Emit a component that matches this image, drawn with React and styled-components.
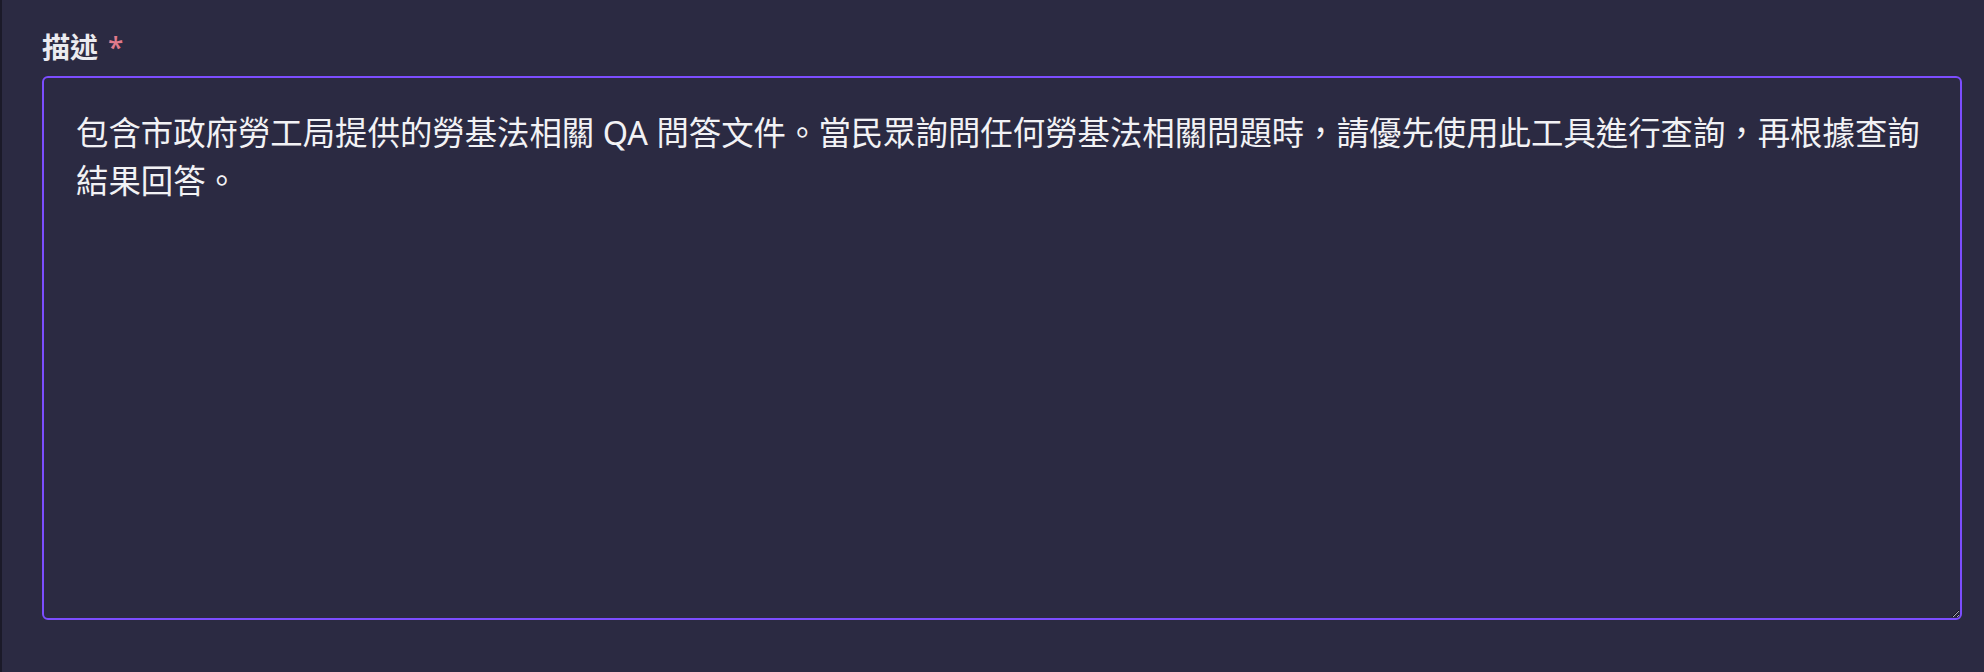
import React, { useEffect, useRef } from "react";
import styled, { createGlobalStyle } from "styled-components";

const DESCRIPTION =
  "包含市政府勞工局提供的勞基法相關 QA 問答文件。當民眾詢問任何勞基法相關問題時，請優先使用此工具進行查詢，再根據查詢結果回答。";

const App = () => {
  const ref = useRef(null);

  useEffect(() => {
    const el = ref.current;
    if (el) {
      el.focus();
      el.setSelectionRange(el.value.length, el.value.length);
    }
  }, []);

  return (
    <Page>
      <GlobalStyle />
      <Rail />
      <Main>
        <Field>
          <Label htmlFor="desc">
            描述<Required>*</Required>
          </Label>
          <TextArea id="desc" ref={ref} defaultValue={DESCRIPTION} />
        </Field>
      </Main>
    </Page>
  );
};

export default App;

const GlobalStyle = createGlobalStyle`
  html, body {
    margin: 0;
    padding: 0;
    background: #2b2a42;
  }
  * {
    box-sizing: border-box;
  }
`;

const Page = styled.div`
  display: flex;
  width: 100%;
  height: 672px;
  background: #2b2a42;
  font-family: "Noto Sans", "Noto Sans CJK TC", sans-serif;
`;

const Rail = styled.div`
  width: 2px;
  flex-shrink: 0;
  background: #1b1a29;
`;

const Main = styled.div`
  flex: 1;
  padding: 27px 22px 0 40px;
`;

const Field = styled.div`
  display: flex;
  flex-direction: column;
`;

const Label = styled.label`
  font-size: 28px;
  line-height: 40px;
  font-weight: 700;
  color: #ebebf0;
  margin-bottom: 9px;
`;

const Required = styled.span`
  color: #e07a8c;
  font-weight: 500;
  margin-left: 10px;
`;

const TextArea = styled.textarea`
  width: 100%;
  height: 544px;
  padding: 30px 28px 30px 32px;
  background: #2b2a42;
  border: 2px solid #7c4dff;
  border-radius: 6px;
  outline: none;
  color: #f2f2f5;
  caret-color: #ffffff;
  font-family: "Noto Sans", "Noto Sans CJK TC", sans-serif;
  font-size: 32.4px;
  line-height: 48px;
  resize: both;
`;
